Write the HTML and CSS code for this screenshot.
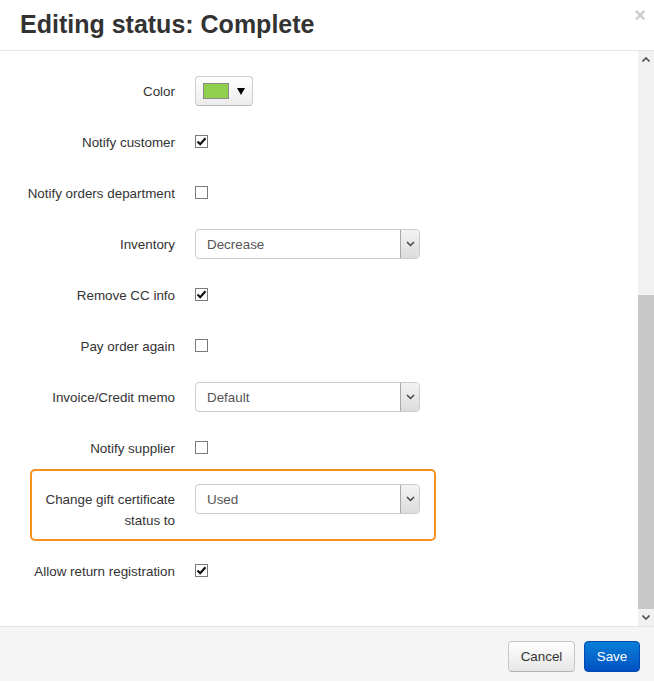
FILE: index.html
```html
<!DOCTYPE html>
<html>
<head>
<meta charset="utf-8">
<link rel="stylesheet" href="styles.css">
</head>
<body>
<div class="modal">
  <div class="header">
    <h3 class="title">Editing status: Complete</h3>
    <span class="close">×</span>
  </div>
  <div class="body">
    <div class="content">
      <div class="row">
        <label class="lbl">Color</label>
        <div class="ctl">
          <div class="colorbtn"><span class="swatch"></span><span class="caret"></span></div>
        </div>
      </div>
      <div class="row">
        <label class="lbl">Notify customer</label>
        <div class="ctl"><span class="cb"><svg width="11" height="11" viewBox="0 0 11 11"><path d="M1.5 5.5 L4.2 8.2 L9.5 2.2" fill="none" stroke="#111" stroke-width="2.2"/></svg></span></div>
      </div>
      <div class="row">
        <label class="lbl">Notify orders department</label>
        <div class="ctl"><span class="cb"></span></div>
      </div>
      <div class="row">
        <label class="lbl">Inventory</label>
        <div class="ctl"><div class="select"><span class="val">Decrease</span><span class="arr"><svg width="9" height="6" viewBox="0 0 9 6"><path d="M1 1 L4.5 4.5 L8 1" fill="none" stroke="#444" stroke-width="1.5"/></svg></span></div></div>
      </div>
      <div class="row">
        <label class="lbl">Remove CC info</label>
        <div class="ctl"><span class="cb"><svg width="11" height="11" viewBox="0 0 11 11"><path d="M1.5 5.5 L4.2 8.2 L9.5 2.2" fill="none" stroke="#111" stroke-width="2.2"/></svg></span></div>
      </div>
      <div class="row">
        <label class="lbl">Pay order again</label>
        <div class="ctl"><span class="cb"></span></div>
      </div>
      <div class="row">
        <label class="lbl">Invoice/Credit memo</label>
        <div class="ctl"><div class="select"><span class="val">Default</span><span class="arr"><svg width="9" height="6" viewBox="0 0 9 6"><path d="M1 1 L4.5 4.5 L8 1" fill="none" stroke="#444" stroke-width="1.5"/></svg></span></div></div>
      </div>
      <div class="row">
        <label class="lbl">Notify supplier</label>
        <div class="ctl"><span class="cb"></span></div>
      </div>
      <div class="row hl">
        <label class="lbl">Change gift certificate status to</label>
        <div class="ctl"><div class="select"><span class="val">Used</span><span class="arr"><svg width="9" height="6" viewBox="0 0 9 6"><path d="M1 1 L4.5 4.5 L8 1" fill="none" stroke="#444" stroke-width="1.5"/></svg></span></div></div>
      </div>
      <div class="row">
        <label class="lbl">Allow return registration</label>
        <div class="ctl"><span class="cb"><svg width="11" height="11" viewBox="0 0 11 11"><path d="M1.5 5.5 L4.2 8.2 L9.5 2.2" fill="none" stroke="#111" stroke-width="2.2"/></svg></span></div>
      </div>
    </div>
    <div class="scrollbar">
      <div class="sbtn"><svg width="8" height="5" viewBox="0 0 8 5"><path d="M0.5 4.5 L4 1 L7.5 4.5" fill="none" stroke="#505050" stroke-width="1.6"/></svg></div>
      <div class="track"><div class="thumb"></div></div>
      <div class="sbtn"><svg width="8" height="5" viewBox="0 0 8 5"><path d="M0.5 0.5 L4 4 L7.5 0.5" fill="none" stroke="#505050" stroke-width="1.6"/></svg></div>
    </div>
  </div>
  <div class="footer">
    <button class="btn cancel">Cancel</button>
    <button class="btn primary">Save</button>
  </div>
</div>
</body>
</html>
```
FILE: styles.css
```css
html, body { margin: 0; padding: 0; background: #fff; }
body { font-family: "Liberation Sans", Arial, sans-serif; color: #333; font-size: 13.4px; }
.modal { width: 654px; height: 682px; display: flex; flex-direction: column; background: #fff; }
.header { height: 50px; border-bottom: 1px solid #e5e5e5; display: flex; justify-content: space-between; align-items: flex-start; padding: 0 10px 0 20px; box-sizing: content-box; }
.title { margin: 0; font-size: 25px; font-weight: bold; line-height: 30px; padding-top: 9px; color: #333; }
.close { font-size: 20px; font-weight: bold; color: #000; opacity: 0.2; line-height: 20px; margin-top: 5px; margin-right: -2px; }
.body { height: 575px; display: flex; }
.content { flex: 1; display: flex; flex-direction: column; gap: 21px; padding-top: 25px; }
.row { display: flex; align-items: flex-start; margin-left: 15px; width: 421px; box-sizing: border-box; }
.lbl { width: 160px; flex: none; text-align: right; line-height: 21px; padding-top: 5px; margin-right: 20px; }
.ctl { height: 30px; display: flex; align-items: center; }
.hl { border: 2px solid #f7901e; border-radius: 5px; margin-left: 30px; width: 406px; padding: 13px 0 8px 0; margin-top: -15px; margin-bottom: -6px; }
.hl .lbl { width: 143px; }
.colorbtn { width: 58px; height: 30px; box-sizing: border-box; border: 1px solid #ccc; border-bottom-color: #bbb; border-radius: 4px; background: linear-gradient(#fff, #ececec); display: flex; align-items: center; padding-left: 7px; }
.swatch { width: 24px; height: 14px; border: 1px solid #8a8a8a; background: #8fcf4c; }
.caret { margin-left: 8px; width: 0; height: 0; border-left: 4px solid transparent; border-right: 4px solid transparent; border-top: 7px solid #000; }
.cb { width: 13px; height: 13px; box-sizing: border-box; border: 1px solid #7a7a7a; background: #fff; display: flex; align-items: center; justify-content: center; margin-top: -1px; }
.cb svg { display: block; }
.select { width: 225px; height: 30px; box-sizing: border-box; border: 1px solid #ccc; border-radius: 4px; background: #fff; display: flex; align-items: stretch; overflow: hidden; }
.val { flex: 1; padding-left: 11px; line-height: 29px; color: #555; }
.arr { width: 18px; background: linear-gradient(#f3f3f3, #dcdcdc); border-left: 1px solid #a8a8a8; display: flex; align-items: center; justify-content: center; }
.arr svg { display: block; }
.scrollbar { width: 16px; flex: none; background: #f1f1f1; display: flex; flex-direction: column; }
.sbtn { height: 17px; display: flex; align-items: center; justify-content: center; }
.track { flex: 1; display: flex; flex-direction: column; justify-content: flex-end; }
.thumb { height: 314px; background: #c8c8c8; }
.footer { height: 55px; border-top: 1px solid #e5e5e5; background: #f5f5f5; display: flex; justify-content: flex-end; align-items: flex-start; padding: 14px 14px 0 0; box-sizing: border-box; gap: 9px; }
.btn { height: 31px; font-family: "Liberation Sans", Arial, sans-serif; font-size: 13.4px; color: #333; border: 1px solid #c8c8c8; border-bottom-color: #b3b3b3; border-radius: 4px; background: linear-gradient(#fff, #e6e6e6); padding: 0; }
.btn.cancel { width: 67px; }
.btn.primary { width: 56px; color: #fff; background: linear-gradient(#0a7fd6, #0052c4); border-color: #0049b0; }
```
